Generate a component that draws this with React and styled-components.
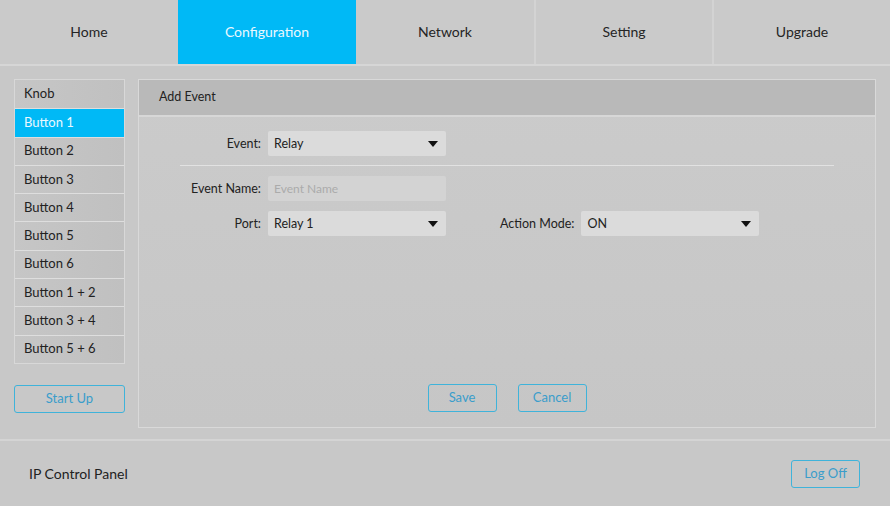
import React from "react";
import styled, { createGlobalStyle } from "styled-components";

const Global = createGlobalStyle`
  html, body { margin: 0; padding: 0; background: #c8c8c8; }
  body { font-family: "Lato", "Open Sans", sans-serif; color: #222; }
  * { box-sizing: border-box; }
`;

const Page = styled.div`
  width: 890px;
  height: 506px;
  display: flex;
  flex-direction: column;
  background: #c8c8c8;
  overflow: hidden;
`;

const Nav = styled.nav`
  height: 66px;
  display: grid;
  grid-template-columns: repeat(5, 1fr);
  border-bottom: 2px solid #d6d6d6;
  background: #cacaca;
`;

const Tab = styled.div`
  display: flex;
  align-items: center;
  justify-content: center;
  padding-bottom: 2px;
  font-size: 14px;
  color: ${(p) => (p.$active ? "#eaf8ff" : "#252525")};
  background: ${(p) => (p.$active ? "#00b9f6" : "transparent")};
  border-left: ${(p) => (p.$divider ? "2px solid #d3d3d3" : "none")};
`;

const Main = styled.div`
  flex: 1;
  display: flex;
  gap: 13px;
  padding: 13px 14px 11px 14px;
  border-bottom: 2px solid #d4d4d4;
`;

const Side = styled.div`
  width: 111px;
  display: flex;
  flex-direction: column;
  gap: 21px;
`;

const Menu = styled.ul`
  list-style: none;
  margin: 0;
  padding: 0;
  border: 1px solid #d8d8d8;
  display: flex;
  flex-direction: column;
`;

const MenuItem = styled.li`
  height: 28.3px;
  display: flex;
  align-items: center;
  padding-left: 9px;
  padding-bottom: 2px;
  font-size: 13px;
  color: ${(p) => (p.$active ? "#eaf8ff" : "#222")};
  background: ${(p) =>
    p.$active ? "#00b9f6" : "linear-gradient(90deg, #c6c6c6, #c0c0c0)"};
  border-top: ${(p) => (p.$first ? "none" : "1px solid #dedede")};
`;

const OutlineButton = styled.button`
  width: ${(p) => p.$w || "69px"};
  height: 28px;
  border: 1px solid #3fb3da;
  border-radius: 3px;
  background: transparent;
  color: #3a9dcb;
  font-family: inherit;
  font-size: 13px;
  padding: 0 0 2px 0;
  cursor: pointer;
`;

const Panel = styled.section`
  flex: 1;
  display: flex;
  flex-direction: column;
  border: 1px solid #d9d9d9;
  background: linear-gradient(180deg, #cbcbcb, #c6c6c6);
`;

const PanelHeader = styled.div`
  height: 37px;
  display: flex;
  align-items: center;
  padding-left: 20px;
  padding-bottom: 2px;
  font-size: 12.5px;
  color: #222;
  background: #b9b9b9;
  border-bottom: 2px solid #d7d7d7;
`;

const Form = styled.div`
  flex: 1;
  display: flex;
  flex-direction: column;
  padding-top: 14px;
`;

const Row = styled.div`
  display: flex;
  align-items: center;
  margin-bottom: ${(p) => p.$mb || "0"};
`;

const Label = styled.label`
  width: ${(p) => p.$w || "129px"};
  margin-left: ${(p) => p.$ml || "0"};
  padding-right: 7px;
  text-align: right;
  font-size: 12.5px;
  color: #222;
  flex-shrink: 0;
`;

const SelectBox = styled.div`
  width: 178px;
  height: 25px;
  display: flex;
  align-items: center;
  justify-content: space-between;
  padding: 0 8px 1px 6px;
  font-size: 12.5px;
  color: #222;
  background: #dbdbdb;
  border-radius: 2px;
`;

const Caret = styled.span`
  width: 0;
  height: 0;
  margin-top: 2px;
  border-left: 5.5px solid transparent;
  border-right: 5.5px solid transparent;
  border-top: 6px solid #111;
`;

const TextInput = styled.div`
  width: 178px;
  height: 25px;
  display: flex;
  align-items: center;
  padding: 0 0 1px 6px;
  font-size: 12px;
  color: #ababab;
  background: #d3d3d3;
  border-radius: 2px;
`;

const Divider = styled.hr`
  border: none;
  border-top: 1px solid #e2e2e2;
  margin: 9px 41px 10px 41px;
`;

const Actions = styled.div`
  margin-top: auto;
  margin-bottom: 15px;
  display: flex;
  justify-content: center;
  gap: 21px;
`;

const Footer = styled.footer`
  height: 65px;
  display: flex;
  align-items: center;
  justify-content: space-between;
  padding: 0 30px 0 29px;
  font-size: 14px;
  color: #222;
`;

function Select({ value }) {
  return (
    <SelectBox>
      <span>{value}</span>
      <Caret />
    </SelectBox>
  );
}

const items = [
  "Knob",
  "Button 1",
  "Button 2",
  "Button 3",
  "Button 4",
  "Button 5",
  "Button 6",
  "Button 1 + 2",
  "Button 3 + 4",
  "Button 5 + 6",
];

const tabs = ["Home", "Configuration", "Network", "Setting", "Upgrade"];

export default function App() {
  return (
    <Page>
      <Global />
      <Nav>
        {tabs.map((t, i) => (
          <Tab key={t} $active={i === 1} $divider={i >= 3}>
            {t}
          </Tab>
        ))}
      </Nav>
      <Main>
        <Side>
          <Menu>
            {items.map((it, i) => (
              <MenuItem key={it} $active={i === 1} $first={i === 0}>
                {it}
              </MenuItem>
            ))}
          </Menu>
          <OutlineButton $w="111px">Start Up</OutlineButton>
        </Side>
        <Panel>
          <PanelHeader>Add Event</PanelHeader>
          <Form>
            <Row>
              <Label>Event:</Label>
              <Select value="Relay" />
            </Row>
            <Divider />
            <Row $mb="10px">
              <Label>Event Name:</Label>
              <TextInput>Event Name</TextInput>
            </Row>
            <Row>
              <Label>Port:</Label>
              <Select value="Relay 1" />
              <Label $w="auto" $ml="54px">
                Action Mode:
              </Label>
              <Select value="ON" />
            </Row>
            <Actions>
              <OutlineButton>Save</OutlineButton>
              <OutlineButton>Cancel</OutlineButton>
            </Actions>
          </Form>
        </Panel>
      </Main>
      <Footer>
        <span>IP Control Panel</span>
        <OutlineButton>Log Off</OutlineButton>
      </Footer>
    </Page>
  );
}
